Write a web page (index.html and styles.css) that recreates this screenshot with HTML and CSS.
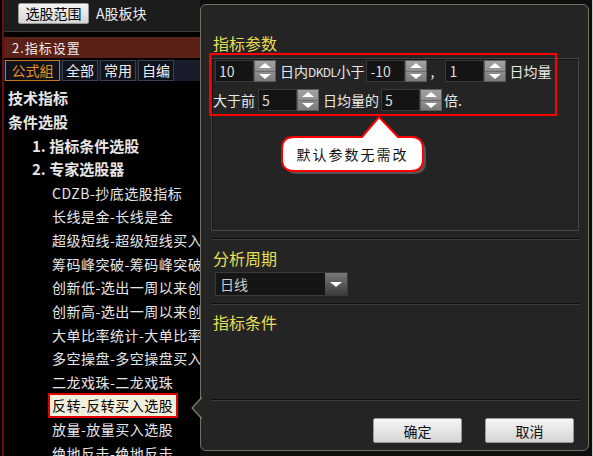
FILE: index.html
```html
<!DOCTYPE html>
<html lang="zh-CN">
<head>
  <meta charset="UTF-8" />
  <title>选股器 - 指标设置</title>
  <link rel="stylesheet" href="styles.css">
</head>
<body>
  <div class="screen">
    <aside class="side">
      <div class="scope">
        <button class="scope-btn">选股范围</button>
        <span class="scope-val">A股板块</span>
      </div>
      <div class="step">2.指标设置</div>
      <div class="tabs">
        <span class="tab active">公式組</span>
        <span class="tab">全部</span>
        <span class="tab">常用</span>
        <span class="tab">自编</span>
      </div>
      <ul class="tree">
        <li class="lv0">技术指标</li>
        <li class="lv0">条件选股</li>
        <li class="lv1">1. 指标条件选股</li>
        <li class="lv1">2. 专家选股器</li>
        <li class="lv2">CDZB-抄底选股指标</li>
        <li class="lv2">长线是金-长线是金</li>
        <li class="lv2">超级短线-超级短线买入选股</li>
        <li class="lv2">筹码峰突破-筹码峰突破选股</li>
        <li class="lv2">创新低-选出一周以来创新低</li>
        <li class="lv2">创新高-选出一周以来创新高</li>
        <li class="lv2">大单比率统计-大单比率统计</li>
        <li class="lv2">多空操盘-多空操盘买入选股</li>
        <li class="lv2">二龙戏珠-二龙戏珠</li>
        <li class="lv2"><span class="picked">反转-反转买入选股</span></li>
        <li class="lv2">放量-放量买入选股</li>
        <li class="lv2">绝地反击-绝地反击</li>
      </ul>
    </aside>

    <main class="dialog-wrap">
      <section class="dialog">
        <svg class="pointer" width="11" height="22" viewBox="0 0 11 22">
          <path d="M11 0 L1 11 L11 22" fill="#242424" stroke="#8a8270" stroke-width="1.2"/>
        </svg>

        <div class="title">指标参数</div>
        <div class="group">
          <div class="prow">
            <span class="field first"><span class="num">10</span><span class="spin"><i class="up"></i><i class="down"></i></span></span>
            <span class="lbl l1">日内<span class="code">DKDL</span>小于</span>
            <span class="field"><span class="num">-10</span><span class="spin"><i class="up"></i><i class="down"></i></span></span>
            <span class="comma">,</span>
            <span class="field"><span class="num">1</span><span class="spin"><i class="up"></i><i class="down"></i></span></span>
            <span class="lbl">日均量</span>
          </div>
          <div class="prow second">
            <span class="lbl lead">大于前</span>
            <span class="field"><span class="num">5</span><span class="spin"><i class="up"></i><i class="down"></i></span></span>
            <span class="lbl l2">日均量的</span>
            <span class="field"><span class="num">5</span><span class="spin"><i class="up"></i><i class="down"></i></span></span>
            <span class="lbl tail">倍.</span>
          </div>
        </div>

        <div class="sep"></div>
        <div class="title t2">分析周期</div>
        <div class="select">
          <span class="select-val">日线</span>
          <span class="select-btn"><i></i></span>
        </div>
        <div class="sep"></div>
        <div class="title t3">指标条件</div>
        <div class="spacer"></div>
        <div class="sep"></div>
        <div class="actions">
          <button class="btn">确定</button>
          <button class="btn">取消</button>
        </div>

        <!-- annotation overlays -->
        <div class="mark"></div>
        <div class="callout">
          <svg width="156" height="68" viewBox="0 0 156 68">
            <path transform="translate(3 3)" d="M18 25 L86 25 L103 5 L122 25 L135 25 Q147 25 147 37 L147 47 Q147 59 135 59 L18 59 Q6 59 6 47 L6 37 Q6 25 18 25 Z" fill="#555"/>
            <path d="M18 25 L86 25 L103 5 L122 25 L135 25 Q147 25 147 37 L147 47 Q147 59 135 59 L18 59 Q6 59 6 47 L6 37 Q6 25 18 25 Z" fill="#fff" stroke="#ff0000" stroke-width="2"/>
          </svg>
          <span class="callout-text">默认参数无需改</span>
        </div>
      </section>
    </main>
  </div>
</body>
</html>
```

FILE: styles.css
```css
body {
  margin: 0;
  background: #000;
  font-family: "Noto Sans CJK SC", "Noto Sans", sans-serif;
}

.screen {
  display: flex;
  width: 593px;
  height: 456px;
  overflow: hidden;
}

/* left tree pane */
.side {
  width: 200px;
  flex: none;
  overflow: hidden;
  background: linear-gradient(to right, #000 2px, #6e0c0c 2px, #6e0c0c 4px, #000 4px);
}

.scope {
  height: 32px;
  box-sizing: border-box;
  display: flex;
  align-items: flex-start;
  padding: 3px 0 0 18px;
  margin-left: 4px;
  background: #1c1c1c;
  border-bottom: 1px solid #3e3e3e;
}

.scope-btn {
  width: 71px;
  height: 21px;
  margin-left: -4px;
  padding: 0;
  border: 1px solid #9a9a9a;
  border-radius: 2px;
  background: linear-gradient(#f4f4f4, #d6d6d6);
  color: #000;
  font-family: inherit;
  font-size: 14px;
  line-height: 19px;
}

.scope-val {
  margin-left: 7px;
  color: #eee;
  font-size: 14px;
  line-height: 21px;
}

.step {
  margin: 5px 0 0 4px;
  height: 21px;
  padding-left: 8px;
  background: #5b2116;
  color: #eee;
  font-size: 13px;
  line-height: 21px;
  letter-spacing: 1px;
}

.tabs {
  display: flex;
  gap: 2px;
  height: 21px;
  margin: 2px 0 0 4px;
  padding-left: 1px;
  background: #191c2a;
}

.tab {
  width: 36px;
  box-sizing: border-box;
  border: 1px solid #3d4050;
  background: #10131c;
  color: #eee;
  font-size: 14px;
  line-height: 19px;
  text-align: center;
}

.tab.active {
  width: 55px;
  border-color: #c8781a;
  color: #e8901c;
}

.tree {
  list-style: none;
  margin: 5px 0 0;
  padding: 0;
}

.tree li {
  height: 23.7px;
  display: flex;
  align-items: center;
  color: #e6e6e6;
  white-space: pre;
}

.lv0 {
  padding-left: 8px;
  font-size: 15px;
  font-weight: bold;
}

.lv1 {
  padding-left: 32px;
  font-size: 15px;
  font-weight: bold;
}

.lv2 {
  padding-left: 52px;
  font-size: 14px;
  letter-spacing: 0.5px;
}

.picked {
  margin-left: -4px;
  padding: 0 3px 0 2px;
  height: 25px;
  box-sizing: border-box;
  line-height: 21px;
  border: 2px solid #e00000;
  background: #f0eedc;
  color: #000;
}

/* right dialog */
.dialog-wrap {
  flex: 1;
  padding: 4px 3px 5px 0;
  background: #0e0e0e;
  border-right: 1px solid #c8c8c8;
}

.dialog {
  position: relative;
  height: 100%;
  box-sizing: border-box;
  display: flex;
  flex-direction: column;
  padding: 28px 9px 7px 10px;
  background: #242424;
  border: 1px solid #77705f;
  border-radius: 6px;
}

.pointer {
  position: absolute;
  left: -10px;
  top: 392px;
}

.title {
  height: 20px;
  padding-left: 2px;
  color: #e4df55;
  font-size: 16px;
  line-height: 20px;
}

.t2 { margin-top: 8px; }
.t3 { margin-top: 7px; }

.group {
  margin-top: 5px;
  height: 173px;
  box-sizing: border-box;
  padding: 1px 0 0 1px;
  border: 1px solid #454545;
  box-shadow: inset 1px 1px 0 #141414;
}

.prow {
  display: flex;
  align-items: center;
  height: 22px;
  color: #e8e8e8;
  font-size: 14px;
  white-space: nowrap;
}

.prow.second { margin-top: 7px; }

.field {
  display: flex;
  height: 22px;
}

.field.first { margin-left: 2px; }

.num {
  width: 39px;
  box-sizing: border-box;
  padding-left: 3px;
  background: #141414;
  border: 1px solid #3a3a3a;
  color: #ddd;
  font-size: 14px;
  line-height: 20px;
}

.spin {
  width: 22px;
  box-sizing: border-box;
  display: flex;
  flex-direction: column;
  border: 1px solid #5c5c5c;
  background: linear-gradient(#a2a2a2, #7c7c7c);
}

.spin i {
  flex: 1;
  display: flex;
  align-items: center;
  justify-content: center;
}

.spin i.up { border-bottom: 1px solid #6a6a6a; }

.spin i::before {
  content: "";
  border-left: 6px solid transparent;
  border-right: 6px solid transparent;
}

.spin i.up::before { border-bottom: 5px solid #fff; }
.spin i.down::before { border-top: 5px solid #fff; }

.lbl { margin-left: 3px; }
.l1 { margin: 0 2px 0 4px; }
.code {
  font-size: 12px;
  letter-spacing: -0.6px;
}
.lead { margin: 0 3px 0 0; width: 42px; }
.l2 { margin: 0 2px 0 4px; width: 56px; }
.tail { margin-left: 2px; }

.comma {
  width: 18px;
  padding-left: 3px;
  box-sizing: border-box;
}

.sep {
  flex: none;
  height: 0;
  margin-top: 7px;
  border-top: 1px solid #0f0f0f;
  border-bottom: 1px solid #3c3c3c;
}

.select {
  display: flex;
  width: 133px;
  height: 24px;
  margin: 4px 0 0 4px;
  box-sizing: border-box;
  background: #151515;
  border: 1px solid #3a3a3a;
}

.select-val {
  flex: 1;
  padding-left: 4px;
  color: #ccc;
  font-size: 14px;
  line-height: 22px;
}

.select-btn {
  width: 22px;
  display: flex;
  align-items: center;
  justify-content: center;
  background: linear-gradient(#777, #3c3c3c);
}

.select-btn i {
  border-left: 6px solid transparent;
  border-right: 6px solid transparent;
  border-top: 5px solid #fff;
}

.spacer { flex: 1; }

.actions {
  display: flex;
  justify-content: flex-end;
  gap: 23px;
  margin-top: 17px;
  padding-right: 5px;
}

.btn {
  width: 89px;
  height: 25px;
  padding: 0;
  border: 1px solid #9a9a9a;
  border-radius: 2px;
  background: linear-gradient(#f6f6f6, #d4d4d4);
  color: #111;
  font-family: inherit;
  font-size: 14px;
}

/* red annotation marks */
.mark {
  position: absolute;
  left: 8px;
  top: 48px;
  width: 348px;
  height: 63px;
  box-sizing: border-box;
  border: 2px solid #f00;
}

.callout {
  position: absolute;
  left: 75px;
  top: 107px;
  width: 156px;
  height: 68px;
}

.callout svg { display: block; }

.callout-text {
  position: absolute;
  left: 6px;
  top: 25px;
  width: 141px;
  height: 34px;
  line-height: 34px;
  text-align: center;
  color: #111;
  font-size: 14px;
  letter-spacing: 2px;
}
```
